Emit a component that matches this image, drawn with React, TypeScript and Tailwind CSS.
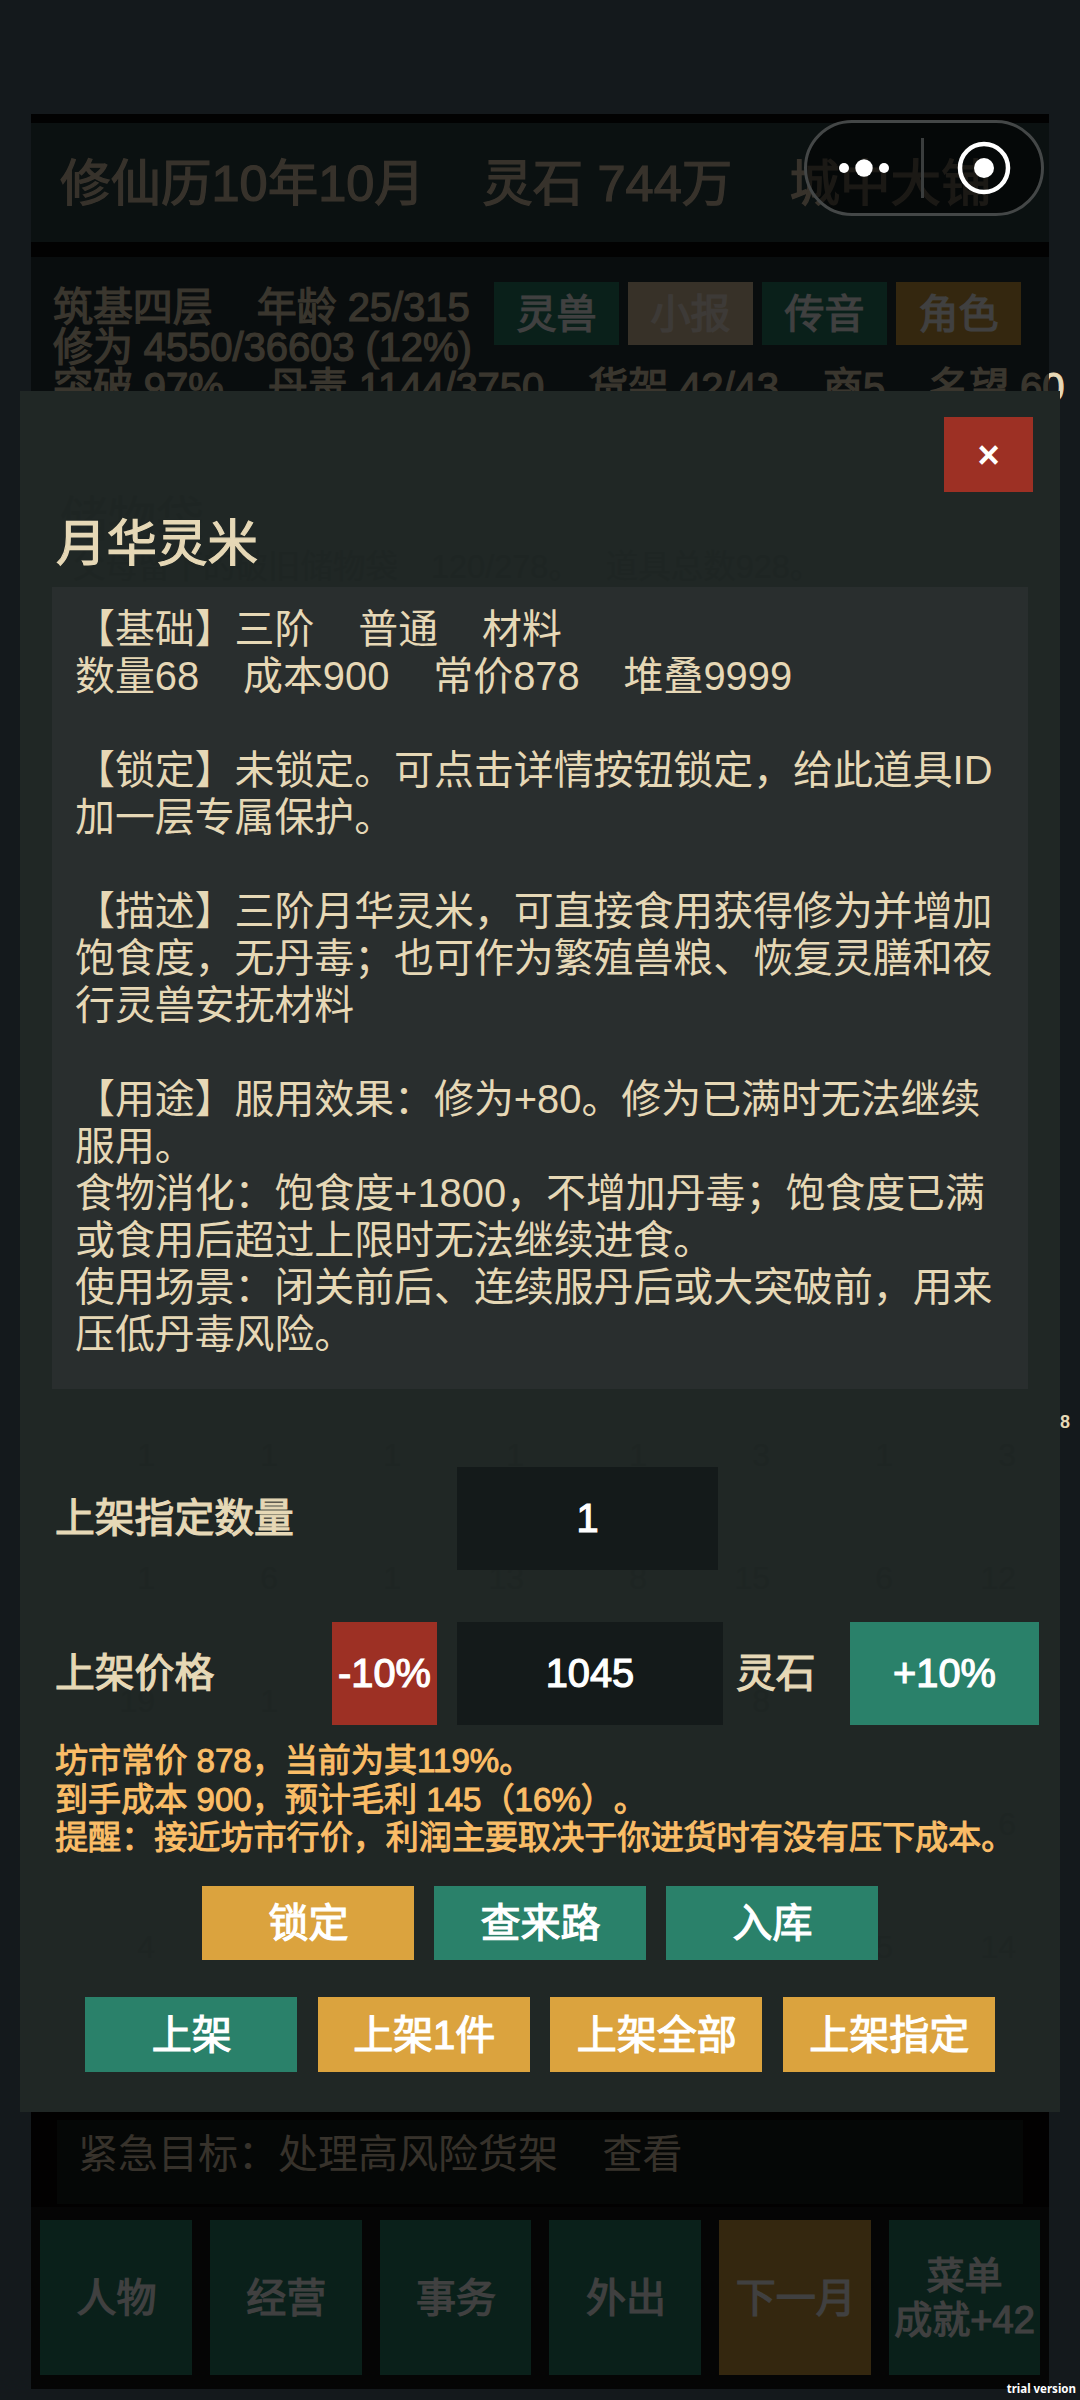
import React from "react";

const cjk = "font-['Liberation_Sans','Noto_Sans_CJK_SC',sans-serif] [text-spacing-trim:space-all]";

const details = [
  "【基础】三阶 \u00a0\u00a0 普通 \u00a0\u00a0 材料",
  "数量68 \u00a0\u00a0 成本900 \u00a0\u00a0 常价878 \u00a0\u00a0 堆叠9999",
  "",
  "【锁定】未锁定。可点击详情按钮锁定，给此道具ID",
  "加一层专属保护。",
  "",
  "【描述】三阶月华灵米，可直接食用获得修为并增加",
  "饱食度，无丹毒；也可作为繁殖兽粮、恢复灵膳和夜",
  "行灵兽安抚材料",
  "",
  "【用途】服用效果：修为+80。修为已满时无法继续",
  "服用。",
  "食物消化：饱食度+1800，不增加丹毒；饱食度已满",
  "或食用后超过上限时无法继续进食。",
  "使用场景：闭关前后、连续服丹后或大突破前，用来",
  "压低丹毒风险。",
];

const bagCounts = [
  ["1", "1", "1", "1", "1", "3", "1", "3"],
  ["1", "6", "1", "13", "8", "15", "6", "12"],
  ["19", "1", "", "", "", "8", "", ""],
  ["", "", "", "", "", "", "", "6"],
  ["4", "", "", "", "", "", "5", "14"],
];

const quickLinks = [
  { label: "灵兽", color: "bg-[#2a816a] text-white" },
  { label: "小报", color: "bg-[#dcc2a0] text-[#f4e8dc]" },
  { label: "传音", color: "bg-[#2a816a] text-white" },
  { label: "角色", color: "bg-[#cf9c3c] text-white" },
];

const tabs = ["人物", "经营", "事务", "外出", "下一月"];

const Capsule = () => (
  <svg className="absolute left-[804px] top-[120px]" width="240" height="96" viewBox="0 0 240 96">
    <rect x="1.5" y="1.5" width="237" height="93" rx="46.5" fill="#000" fillOpacity=".5" stroke="#444747" strokeWidth="3" />
    <circle cx="40" cy="48" r="5" fill="#fff" />
    <circle cx="60" cy="48" r="8.7" fill="#fff" />
    <circle cx="80" cy="48" r="5" fill="#fff" />
    <path d="M118.500 18V78" stroke="#3a3d3d" strokeWidth="3" />
    <circle cx="180" cy="48" r="24" fill="none" stroke="#fff" strokeWidth="4.500" />
    <circle cx="180" cy="48" r="10" fill="#fff" />
  </svg>
);

const Button = ({ label, color }: { label: string; color: string }) => (
  <button className={`h-full w-[212px] pl-px pt-px text-[40px] text-white [-webkit-text-stroke:1.2px] ${color}`}>{label}</button>
);

const App = () => {
  return (
    <div className={`relative h-[2400px] w-[1080px] overflow-hidden bg-[#14191c] text-[#e6d8b6] ${cjk}`}>
      <div className="px-[31px] pt-[114px]">
        <div className="flex h-[2275px] flex-col bg-[#080a0a] pt-[9px] [-webkit-text-stroke:1.2px]">
          <div className="flex h-[119px] items-center whitespace-pre bg-[#2e4444] pl-[29px] pt-[3px] text-[50.500px] text-[#dcc8ac] [word-spacing:0.3px]">
            修仙历10年10月{"    "}灵石 744万{"    "}城中大铺
          </div>
          <div className="mt-[15px] h-[1846px] bg-[#26343a] pt-[25px]">
            <div className="flex h-[63px]">
              <div className="w-[463px] shrink-0 whitespace-pre pl-[22px] pt-[5px] text-[40px] leading-[40px] tracking-[-0.08px]">
                <p>筑基四层{"    "}年龄 25/315</p>
                <p>修为 4550/36603 (12%)</p>
                <p>突破 97%{"    "}丹毒 1144/3750{"    "}货架 42/43{"    "}商5{"    "}名望 60</p>
              </div>
              <div className="flex gap-[9px]">
                {quickLinks.map((q) => (
                  <button key={q.label} className={`w-[125px] text-[40px] ${q.color}`}>
                    {q.label}
                  </button>
                ))}
              </div>
            </div>
          </div>
          <div className="h-[104px] bg-[#080606] px-[26px] pt-[17px]">
            <div className="h-[84px] whitespace-pre bg-[#141c1a] pl-[21px] text-[40px] leading-[68px] text-[#dcc8ac] [-webkit-text-stroke:0]">
              紧急目标：处理高风险货架{"    "}查看
            </div>
          </div>
          <div className="flex flex-1 gap-[18px] bg-[#141414] px-[9px] pb-[14px] pt-[13px] text-[40px] text-white">
            {tabs.map((t) => (
              <button key={t} className={`flex-1 whitespace-nowrap pl-px pt-px ${t === "下一月" ? "bg-[#cf9c3c]" : "bg-[#2a816a]"}`}>
                {t}
              </button>
            ))}
            <button className="flex-1 whitespace-nowrap bg-[#2a816a] text-[38px] leading-[44px]">
              菜单
              <br />
              成就+42
            </button>
          </div>
        </div>
      </div>
      <div className="absolute left-[31px] top-[114px] h-[2275px] w-[1018px] bg-black/75" />
      <Capsule />
      <span className="absolute left-[1060px] top-[1409px] text-[18px] font-bold">8</span>

      {/* item dialog */}
      <div className="absolute left-[20px] top-[391px] h-[1721px] w-[1040px] bg-[#202725]">
        {/* bag contents showing through the panel */}
        <div className="absolute left-[40px] top-[104px] whitespace-pre text-[#1e2523]">
          <p className="text-[48px] leading-[50px]">储物袋</p>
          <p className="pl-[13px] text-[32.500px] leading-[44px] [word-spacing:-0.8px]">父母留下的破旧储物袋{"    "}120/278。{"   "}道具总数928。</p>
        </div>
        <div className="absolute left-[32px] top-[1040px] text-[32px] text-[#1e2523]">
          {bagCounts.map((row, i) => (
            <div key={i} className="flex h-[123px] gap-[14px]">
              {row.map((n, j) => (
                <span key={j} className="w-[109px] pr-[6px] text-right">
                  {n}
                </span>
              ))}
            </div>
          ))}
        </div>

        <div className="relative flex h-full flex-col pt-[26px]">
          <button className="ml-[924px] h-[75px] w-[89px] bg-[#9d3024] pt-[2px] text-[38px] font-bold text-white">×</button>
          <h1 className="ml-[36px] mt-[17px] text-[50.500px] leading-[70px] [-webkit-text-stroke:1.2px]">月华灵米</h1>
          <div className="ml-[32px] mt-[8px] h-[802px] w-[976px] whitespace-pre bg-[#292e2e] pl-[23px] pt-[19px] text-[39.900px] leading-[47px] [word-spacing:-0.1px]">
            {details.map((line, i) => (
              <p key={i} className="h-[47px]">
                {line}
              </p>
            ))}
          </div>

          <div className="mt-[78px] flex h-[103px] items-center pl-[35px] text-[39.800px] [-webkit-text-stroke:1.2px]">
            <span className="w-[402px] pt-px">上架指定数量</span>
            <div className="flex h-full w-[261px] items-center justify-center bg-[#141a1a] text-white">1</div>
          </div>
          <div className="mt-[52px] flex h-[103px] items-center pl-[35px] text-[39.800px] [-webkit-text-stroke:1.2px]">
            <span className="w-[277px] pt-px">上架价格</span>
            <button className="h-full w-[105px] bg-[#9d3024] text-white">-10%</button>
            <div className="ml-[20px] flex h-full w-[266px] items-center justify-center bg-[#141a1a] text-white">1045</div>
            <span className="ml-[13px] w-[114px]">灵石</span>
            <button className="h-full w-[189px] bg-[#2a816a] text-white">+10%</button>
          </div>

          <div className="mt-[17px] whitespace-pre pl-[35px] text-[33.100px] leading-[38.500px] text-[#fabd67] [-webkit-text-stroke:1px]">
            <p>坊市常价 878，当前为其119%。</p>
            <p>到手成本 900，预计毛利 145（16%）。</p>
            <p>提醒：接近坊市行价，利润主要取决于你进货时有没有压下成本。</p>
          </div>

          <div className="mt-[28px] flex h-[74px] justify-center gap-[20px]">
            <Button label="锁定" color="bg-[#dba33e]" />
            <Button label="查来路" color="bg-[#2a816a]" />
            <Button label="入库" color="bg-[#2a816a]" />
          </div>
          <div className="mt-[37px] flex h-[75px] justify-center gap-[20.500px]">
            <Button label="上架" color="bg-[#2a816a]" />
            <Button label="上架1件" color="bg-[#dba33e]" />
            <Button label="上架全部" color="bg-[#dba33e]" />
            <Button label="上架指定" color="bg-[#dba33e]" />
          </div>
        </div>
      </div>

      <span className="absolute right-[4px] top-[2380px] font-['Noto_Sans',sans-serif] text-[11.500px] font-bold leading-[18px] text-white">
        trial version
      </span>
    </div>
  );
};

export default App;
